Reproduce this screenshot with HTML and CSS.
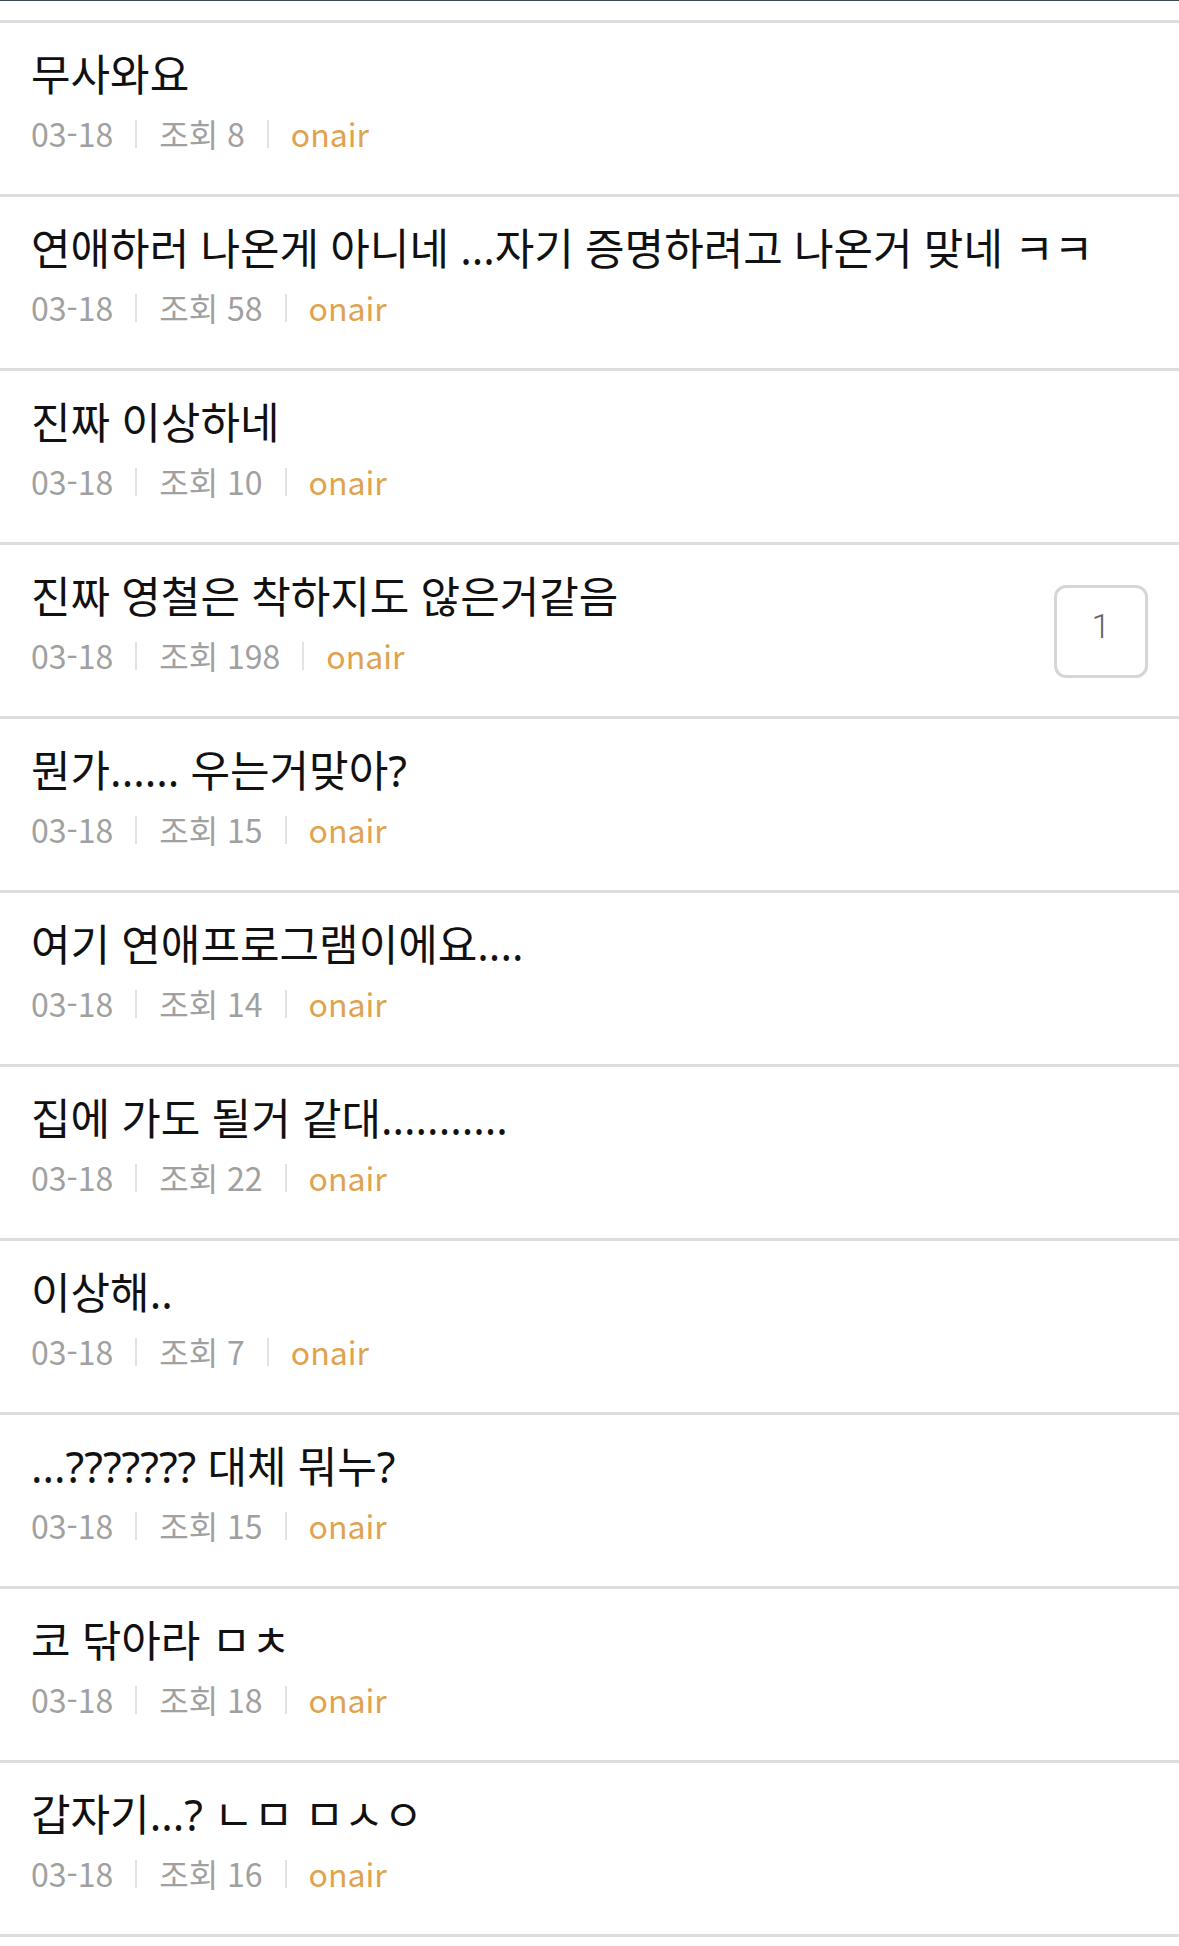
FILE: index.html
```html
<!DOCTYPE html>
<html lang="ko">
<head>
<meta charset="utf-8">
<link rel="stylesheet" href="styles.css">
</head>
<body>
<div class="topbar"></div>
<ul class="list">
  <li class="row"><div class="body"><div class="title">무사와요</div><div class="meta"><span>03-18</span><span class="sep"></span><span>조회 8</span><span class="sep"></span><span class="author">onair</span></div></div></li>
  <li class="row"><div class="body"><div class="title">연애하러 나온게 아니네 ...자기 증명하려고 나온거 맞네 ㅋㅋ</div><div class="meta"><span>03-18</span><span class="sep"></span><span>조회 58</span><span class="sep"></span><span class="author">onair</span></div></div></li>
  <li class="row"><div class="body"><div class="title">진짜 이상하네</div><div class="meta"><span>03-18</span><span class="sep"></span><span>조회 10</span><span class="sep"></span><span class="author">onair</span></div></div></li>
  <li class="row"><div class="body"><div class="title">진짜 영철은 착하지도 않은거같음</div><div class="meta"><span>03-18</span><span class="sep"></span><span>조회 198</span><span class="sep"></span><span class="author">onair</span></div></div><div class="badge">1</div></li>
  <li class="row"><div class="body"><div class="title">뭔가...... 우는거맞아?</div><div class="meta"><span>03-18</span><span class="sep"></span><span>조회 15</span><span class="sep"></span><span class="author">onair</span></div></div></li>
  <li class="row"><div class="body"><div class="title">여기 연애프로그램이에요....</div><div class="meta"><span>03-18</span><span class="sep"></span><span>조회 14</span><span class="sep"></span><span class="author">onair</span></div></div></li>
  <li class="row"><div class="body"><div class="title">집에 가도 될거 같대...........</div><div class="meta"><span>03-18</span><span class="sep"></span><span>조회 22</span><span class="sep"></span><span class="author">onair</span></div></div></li>
  <li class="row"><div class="body"><div class="title">이상해..</div><div class="meta"><span>03-18</span><span class="sep"></span><span>조회 7</span><span class="sep"></span><span class="author">onair</span></div></div></li>
  <li class="row"><div class="body"><div class="title">...??????? 대체 뭐누?</div><div class="meta"><span>03-18</span><span class="sep"></span><span>조회 15</span><span class="sep"></span><span class="author">onair</span></div></div></li>
  <li class="row"><div class="body"><div class="title">코 닦아라 ㅁㅊ</div><div class="meta"><span>03-18</span><span class="sep"></span><span>조회 18</span><span class="sep"></span><span class="author">onair</span></div></div></li>
  <li class="row"><div class="body"><div class="title">갑자기...? ㄴㅁ ㅁㅅㅇ</div><div class="meta"><span>03-18</span><span class="sep"></span><span>조회 16</span><span class="sep"></span><span class="author">onair</span></div></div></li>
</ul>
</body>
</html>
```

FILE: styles.css
```css
html, body {
  margin: 0;
  padding: 0;
  background: #ffffff;
}
body {
  font-family: "Noto Sans CJK KR", "Noto Sans", sans-serif;
  width: 1179px;
  overflow: hidden;
}
.topbar {
  height: 1px;
  background: #3a4656;
  margin-bottom: 19px;
}
.list {
  list-style: none;
  margin: 0;
  padding: 0;
  border-bottom: 3px solid #dddddd;
}
.row {
  border-top: 3px solid #dddddd;
  height: 171px;
  box-sizing: content-box;
  display: flex;
  align-items: center;
  padding: 0 31px 0 31px;
}
.body {
  flex: 1;
  display: flex;
  flex-direction: column;
  gap: 11px;
  padding-bottom: 13px;
}
.title {
  font-family: "Noto Sans", "Noto Sans CJK KR", sans-serif;
  font-size: 43px;
  line-height: 50px;
  color: #111111;
  white-space: nowrap;
}
.meta {
  display: flex;
  align-items: center;
  font-family: "Noto Sans CJK KR", "Noto Sans", sans-serif;
  font-size: 32px;
  line-height: 44px;
  color: #a0a0a0;
}
.sep {
  display: inline-block;
  width: 2px;
  height: 28px;
  background: #e2e2e2;
  margin: 2px 22px 0;
}
.author {
  color: #e0a24e;
}
.badge {
  width: 88px;
  border: 3px solid #d6d6d6;
  border-radius: 12px;
  display: flex;
  align-items: center;
  justify-content: center;
  font-family: Roboto, "Noto Sans", sans-serif;
  font-weight: 300;
  font-size: 34px;
  color: #666666;
  padding-bottom: 12px;
  box-sizing: content-box;
  height: 75px;
  margin-top: 2px;
}
```
